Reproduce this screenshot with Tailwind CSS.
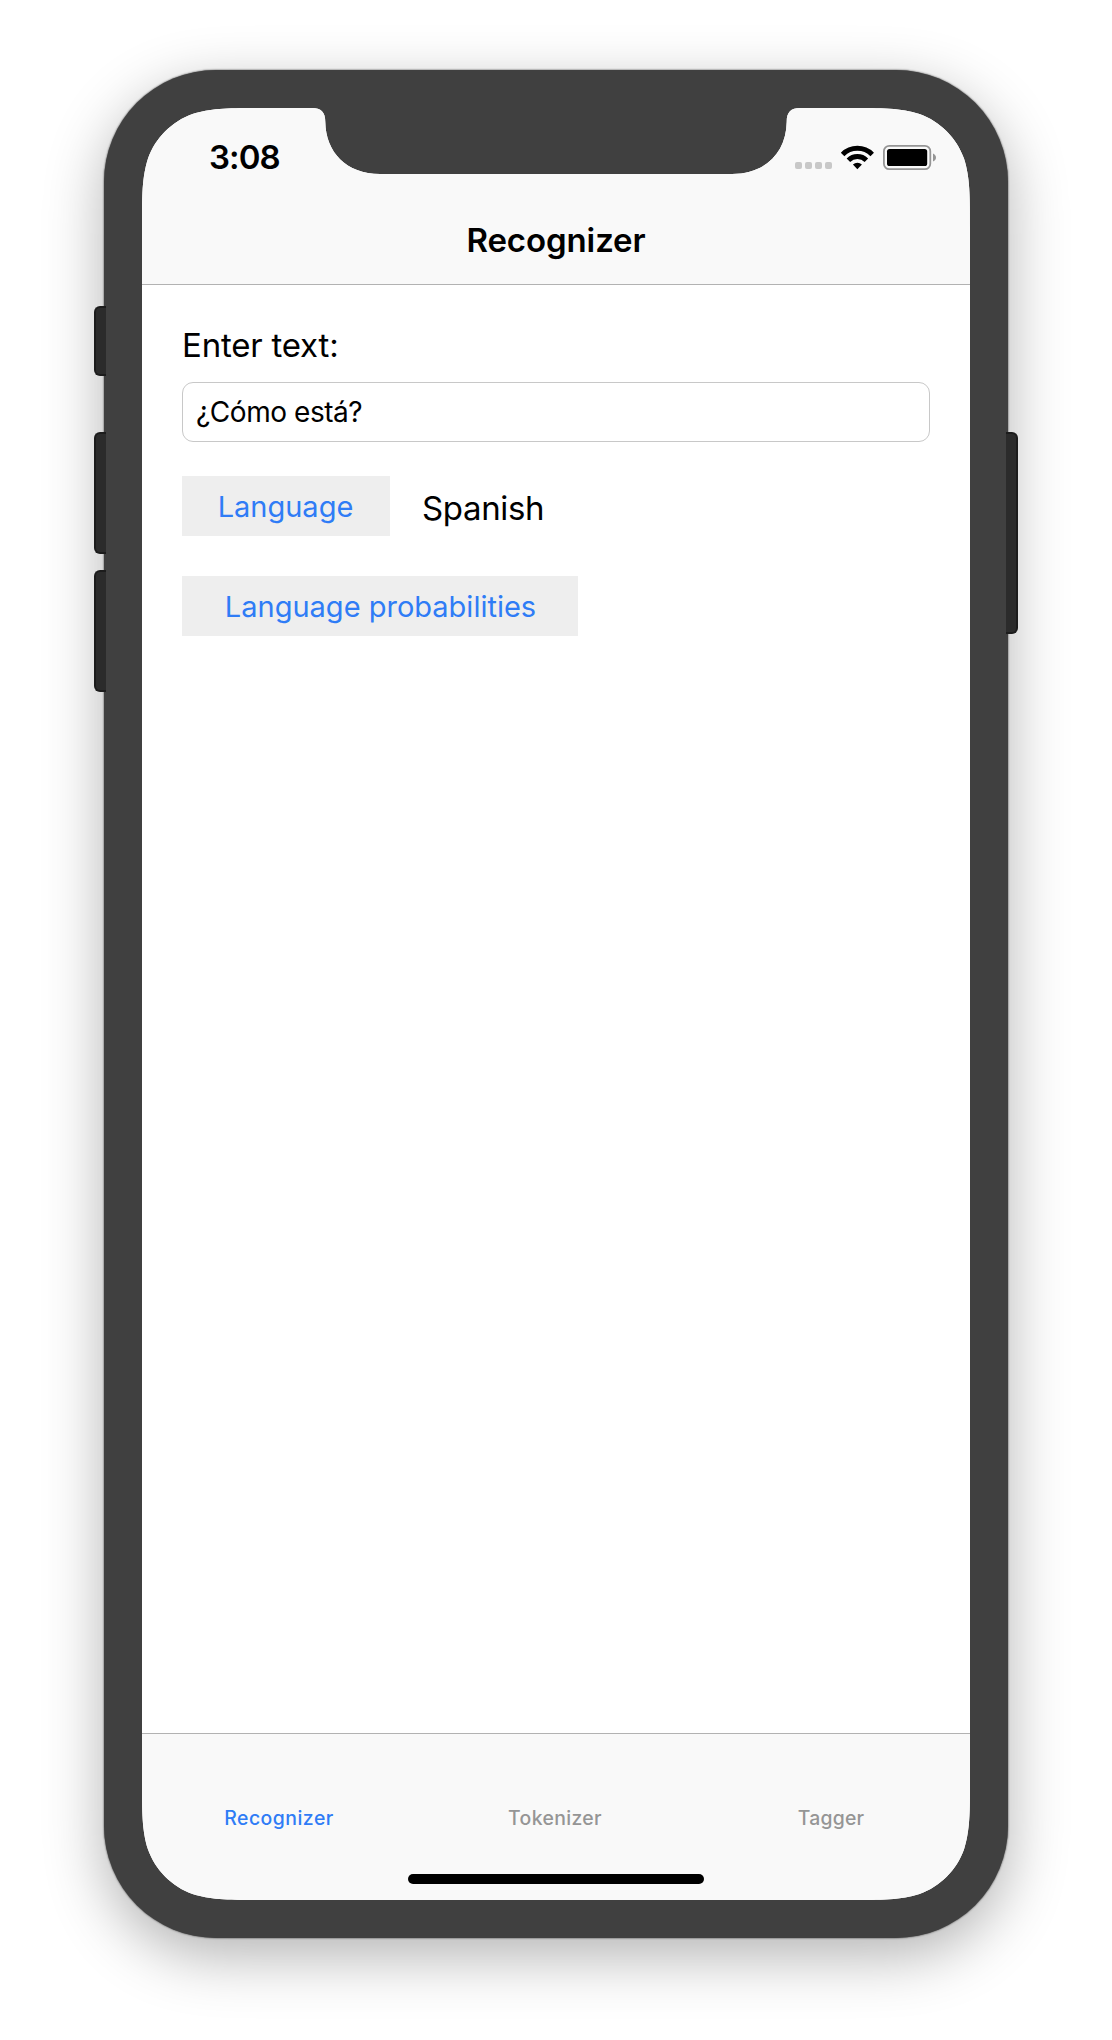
<!DOCTYPE html>
<html lang="en">
<head>
<meta charset="utf-8">
<title>Recognizer</title>
<script src="https://cdn.jsdelivr.net/npm/@tailwindcss/browser@4"></script>
</head>
<body class="bg-white font-[Inter,sans-serif] text-black">
<div class="flex h-[2040px] w-[1112px] justify-center overflow-hidden pt-[70px]">
  <div class="relative h-[1868px] w-[904px] rounded-[112px] bg-[#404040] p-[38px] shadow-[0_0_2px_rgba(0,0,0,0.8),0_18px_60px_rgba(0,0,0,0.3)]">
    <!-- hardware buttons -->
    <div class="absolute top-[236px] -left-[10px] h-[70px] w-3 rounded-l-[6px] border-2 border-r-0 border-[#1c1c1c] bg-[#2b2b2b]"></div>
    <div class="absolute top-[362px] -left-[10px] h-[122px] w-3 rounded-l-[6px] border-2 border-r-0 border-[#1c1c1c] bg-[#2b2b2b]"></div>
    <div class="absolute top-[500px] -left-[10px] h-[122px] w-3 rounded-l-[6px] border-2 border-r-0 border-[#1c1c1c] bg-[#2b2b2b]"></div>
    <div class="absolute top-[362px] -right-[10px] h-[202px] w-3 rounded-r-[6px] border-2 border-l-0 border-[#1c1c1c] bg-[#2b2b2b]"></div>

    <!-- screen with rounded corners and notch -->
    <div class="flex h-[1792px] w-[828px] flex-col bg-white [clip-path:path('M122.5,0_H170_C179,0_183.3,4_183.3,14_C183.8,44_204,66_238,66_H590_C624,66_644.2,44_644.7,14_C644.7,4_649,0_658,0_H705.5_C740.9,0_758.5,0_777.5,6_C798.2,13.5_814.5,29.8_822,50.5_C828,69.5_828,87.1_828,122.5_V1669.5_C828,1704.9_828,1722.5_822,1741.5_C814.5,1762.2_798.2,1778.5_777.5,1786_C758.5,1792_740.9,1792_705.5,1792_H122.5_C87.1,1792_69.5,1792_50.5,1786_C29.8,1778.5_13.5,1762.2_6,1741.5_C0,1722.5_0,1704.9_0,1669.5_V122.5_C0,87.1_0,69.5_6,50.5_C13.5,29.8_29.8,13.5_50.5,6_C69.5,0_87.1,0_122.5,0_Z')]">
      <header class="flex h-[177px] flex-col border-b border-[#b2b2b2] bg-[#f9f9f9]">
        <div class="flex h-[88px] items-start justify-between pt-[29px] pr-[30px] pl-[67px]">
          <span class="text-[33px] leading-10 font-semibold tracking-[-0.9px]">3:08</span>
          <svg class="mt-[3px] h-[35px] w-[150px]" viewBox="790 140 150 35" fill="none">
            <g fill="#c8c8c8">
              <rect x="795" y="162" width="7" height="7" rx="2"/>
              <rect x="805" y="162" width="7" height="7" rx="2"/>
              <rect x="815" y="162" width="7" height="7" rx="2"/>
              <rect x="825" y="162" width="7" height="7" rx="2"/>
            </g>
            <g stroke="#000" stroke-width="5">
              <path d="M842.6 154.4A21 21 0 0 1 872.2 154.4"/>
              <path d="M848.4 160.3A12.8 12.8 0 0 1 866.4 160.3"/>
            </g>
            <path fill="#000" d="M852.9 164.6A6.6 6.6 0 0 1 861.9 164.6L857.4 169.2Z"/>
            <rect x="883.9" y="145.9" width="46.4" height="23.2" rx="5.4" stroke="#959595" stroke-width="1.8"/>
            <rect x="887" y="149" width="40.2" height="17" rx="2.6" fill="#000"/>
            <path fill="#959595" d="M933 153.4C934.8 154.2 936 155.6 936 157.4S934.8 160.6 933 161.4Z"/>
          </svg>
        </div>
        <div class="flex h-[88px] items-center justify-center">
          <h1 class="text-[33px] leading-10 font-semibold tracking-[-0.1px]">Recognizer</h1>
        </div>
      </header>

      <main class="flex flex-1 flex-col items-start px-10 pt-10">
        <label class="text-[33px] leading-10 tracking-[-0.2px]">Enter text:</label>
        <div class="mt-[17px] flex h-[60px] w-full items-center rounded-[11px] border border-[#c8c8c8] pl-[13px] text-[28px] leading-10 tracking-[-0.45px]">¿Cómo está?</div>
        <div class="mt-[34px] flex items-center gap-8">
          <button class="h-[60px] w-[208px] bg-[#eeeeee] pt-[2px] pr-px text-[29px] text-[#2f7cf6]">Language</button>
          <span class="pt-[3px] text-[33px] leading-10 tracking-[-0.36px]">Spanish</span>
        </div>
        <button class="mt-10 h-[60px] w-[396px] bg-[#eeeeee] pt-[2px] pl-px text-[29px] text-[#2f7cf6]">Language probabilities</button>
      </main>

      <footer class="flex h-[167px] flex-col items-center border-t border-[#b2b2b2] bg-[#f9f9f9]">
        <nav class="grid w-full grid-cols-3 pt-[72px] text-center text-[19.4px] leading-6 font-medium text-[#959595]">
          <span class="pr-[2px] tracking-[0.5px] text-[#2f7cf6]">Recognizer</span>
          <span class="pr-[2px] tracking-[0.36px]">Tokenizer</span>
          <span class="pr-[2px] tracking-[0.2px]">Tagger</span>
        </nav>
        <div class="mt-[44px] h-[10px] w-[296px] rounded-full bg-black"></div>
      </footer>
    </div>
  </div>
</div>
</body>
</html>
